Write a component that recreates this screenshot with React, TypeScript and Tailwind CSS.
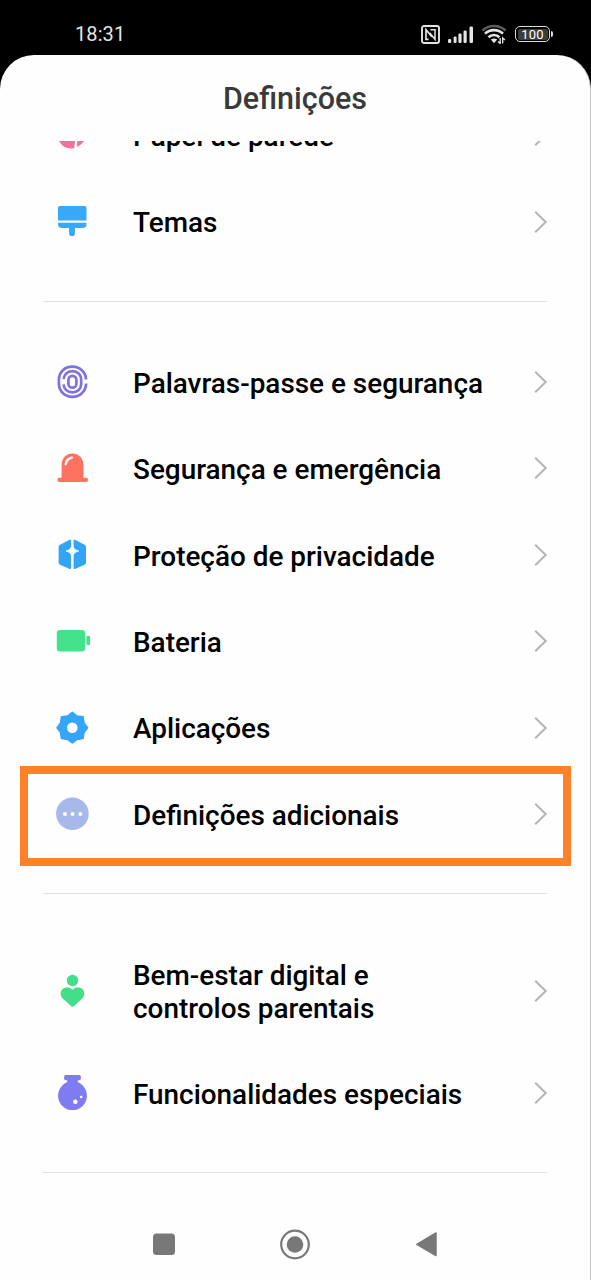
import type { ReactNode } from "react";

type Item = {
  label: string;
  icon: ReactNode;
  tall?: boolean;
};

const Icon = ({ children }: { children: ReactNode }) => (
  <svg viewBox="0 0 40 40" className="w-10 h-10 shrink-0" fill="none">
    {children}
  </svg>
);

const WallpaperIcon = () => (
  <Icon>
    <path d="M5.8 18a13.5 13.5 0 0 0 16.3 15.2L24.2 18z" fill="#f4709a" />
    <path d="M26.4 18l-1.8 13.9A14 14 0 0 0 34 18z" fill="#f4709a" />
  </Icon>
);

const ThemesIcon = () => (
  <Icon>
    <path d="M8 4h24.5a2 2 0 0 1 2 2v12.5H6V6a2 2 0 0 1 2-2z" fill="#38a9f8" />
    <path
      d="M6 20.7h28.5v1.3a4 4 0 0 1-4 4h-6.8a.8.8 0 0 0-.8.8v4.4a2.9 2.9 0 0 1-5.8 0v-4.4a.8.8 0 0 0-.8-.8H10a4 4 0 0 1-4-4z"
      fill="#38a9f8"
    />
  </Icon>
);

const FingerprintIcon = () => (
  <Icon>
    <g stroke="#7d72df" strokeWidth="2.7">
      <path d="M34.1 17.5v-.2C33.6 10 27.8 4.7 20.4 4.7 12.4 4.7 6.9 10.4 6.9 17.8v3.8c0 7.6 5.6 13.2 13.5 13.2 7.4 0 13.2-5.3 13.7-12.6v-.6" />
      <path d="M11.6 17.2c.3-4.6 3.8-8 8.8-8 5.1 0 8.8 3.5 8.8 8.5v4.2c0 5-3.7 8.4-8.8 8.4-5 0-8.5-3.3-8.8-8" />
      <rect x="16.4" y="13.9" width="8" height="11.8" rx="4" />
    </g>
  </Icon>
);

const AlarmIcon = () => (
  <Icon>
    <path
      d="M9.6 29.8V17.3c0-7 4.4-11.8 10.9-11.8s10.9 4.8 10.9 11.8v12.5H34a2 2 0 0 1 0 4.2H7.4a2 2 0 0 1 0-4.2z"
      fill="#fd735f"
    />
    <path
      d="M13.7 16.1c.6-3.4 2.8-5.7 6-6.5"
      stroke="#fff"
      strokeWidth="2.5"
      strokeLinecap="round"
    />
  </Icon>
);

const PrivacyIcon = () => (
  <Icon>
    <path
      d="M17.7 4.7 8 9.7a2.6 2.6 0 0 0-1.4 2.3v15.4a2.6 2.6 0 0 0 1.4 2.3l9.7 4.2a.9.9 0 0 0 1.3-.8V5.5a.9.9 0 0 0-1.3-.8zM22.9 4.7l9.7 5a2.6 2.6 0 0 1 1.4 2.3v15.4a2.6 2.6 0 0 1-1.4 2.3l-9.7 4.2a.9.9 0 0 1-1.3-.8V5.5a.9.9 0 0 1 1.3-.8z"
      fill="#32a5f6"
    />
    <path
      d="M20.3 8.5c.9 4.6 2 6.3 6.3 7.5-4.3 1.2-5.4 2.9-6.3 7.5-.9-4.6-2-6.3-6.3-7.5 4.3-1.2 5.400-2.900 6.300-7.500z"
      fill="#fff"
      stroke="#fff"
      strokeWidth=".8"
    />
  </Icon>
);

const BatteryIcon = () => (
  <Icon>
    <rect x="4.8" y="9" width="28.3" height="21.5" rx="3.2" fill="#43e38c" />
    <rect x="34.4" y="14.7" width="3.7" height="9.5" rx="1.4" fill="#43e38c" />
  </Icon>
);

const GearIcon = () => (
  <Icon>
    <path
      d="M20.3 4.4 25 8.100 31 8.900 31.900 15 35.500 19.700 31.900 24.400 31 30.400 25 31.300 20.300 34.900 15.600 31.300 9.600 30.400 8.700 24.400 5.100 19.700 8.700 15 9.600 8.900 15.600 8.100z"
      fill="#34a5f7"
      stroke="#34a5f7"
      strokeWidth="1.8"
      strokeLinejoin="round"
    />
    <circle cx="20.3" cy="19.7" r="5.3" fill="#fff" />
  </Icon>
);

const MoreIcon = () => (
  <Icon>
    <circle cx="20.4" cy="19.7" r="16.3" fill="#a7b9e8" />
    <g fill="#fff">
      <circle cx="13" cy="19.9" r="2" />
      <circle cx="20.5" cy="19.9" r="2" />
      <circle cx="28.3" cy="19.9" r="2" />
    </g>
  </Icon>
);

const WellbeingIcon = () => (
  <Icon>
    <circle cx="20.5" cy="9.5" r="5.7" fill="#43df88" />
    <path
      d="M20.5 18.7c2-2 4.2-2.5 6.5-2.2 5 .7 7 6.4 3.8 10.4l-9 8.3a1.9 1.9 0 0 1-2.6 0l-9-8.3c-3.2-4-1.2-9.7 3.8-10.4 2.3-.3 4.5.2 6.500 2.200z"
      fill="#43df88"
    />
  </Icon>
);

const FlaskIcon = () => (
  <Icon>
    <circle cx="20.5" cy="22.7" r="14.4" fill="#7f7bf2" />
    <path
      d="M13.9 2.100h13.200a1.800 1.800 0 0 1 1.800 1.800v1.500a1.800 1.800 0 0 1-1.800 1.800h-1.300v4H15.200v-4h-1.300a1.800 1.800 0 0 1-1.800-1.800V3.900a1.800 1.800 0 0 1 1.800-1.800z"
      fill="#7f7bf2"
    />
    <circle cx="23.3" cy="28.8" r="2.3" fill="#fff" />
    <circle cx="29.2" cy="24" r="1.3" fill="#fff" />
  </Icon>
);

const sections: Item[][] = [
  [
    { label: "Papel de parede", icon: <WallpaperIcon /> },
    { label: "Temas", icon: <ThemesIcon /> },
  ],
  [
    { label: "Palavras-passe e segurança", icon: <FingerprintIcon /> },
    { label: "Segurança e emergência", icon: <AlarmIcon /> },
    { label: "Proteção de privacidade", icon: <PrivacyIcon /> },
    { label: "Bateria", icon: <BatteryIcon /> },
    { label: "Aplicações", icon: <GearIcon /> },
    { label: "Definições adicionais", icon: <MoreIcon /> },
  ],
  [
    {
      label: "Bem-estar digital e controlos parentais",
      icon: <WellbeingIcon />,
      tall: true,
    },
    { label: "Funcionalidades especiais", icon: <FlaskIcon /> },
  ],
];

const highlighted = "Definições adicionais";

function Row({ item }: { item: Item }) {
  return (
    <div
      className={`relative flex items-center pl-[52px] pr-[42px] ${
        item.tall ? "h-[119px]" : "h-[86.4px]"
      }`}
    >
      {item.icon}
      <span className="ml-[41px] w-[360px] pt-1 text-[27.9px] leading-[32.5px] font-medium text-black">
        <span className={item.tall ? "block w-[265px]" : "whitespace-nowrap"}>
          {item.label}
        </span>
      </span>
      <svg
        viewBox="0 0 14 24"
        className="ml-auto w-3.5 h-6 shrink-0"
        fill="none"
        stroke="#b4b4b4"
        strokeWidth="2"
      >
        <path d="M1.2 1.8 11.7 12 1.2 22.2" />
      </svg>
      {item.label === highlighted && (
        <div className="absolute left-5 top-[-5px] w-[551px] h-[100px] border-8 border-[#ff8228]" />
      )}
    </div>
  );
}

function StatusBar() {
  return (
    <div className="flex h-[55px] shrink-0 items-center justify-between bg-black pl-[75px] pr-[38px] pt-[14px] pb-[1px] text-[#e4e4e4]">
      <span className="text-[20px] leading-10 tracking-[0.1px]">18:31</span>
      <div className="flex items-center">
        <svg viewBox="0 0 19 19" className="w-[19px] h-[19px]" fill="none" stroke="currentColor">
          <rect x="1" y="1" width="17" height="17" rx="2" strokeWidth="1.9" />
          <path d="M7.600 14.300H5V4.600l5.800 7.200" strokeWidth="1.700" />
          <path d="M9.400 4.700H14v9.600L8.600 7.800" strokeWidth="1.500" />
        </svg>
        <svg viewBox="0 0 26 17" className="ml-2 w-[26px] h-[17px]" fill="currentColor">
          <rect x="0" y="13" width="3.2" height="4" rx="1.2" />
          <rect x="5.6" y="10.5" width="3" height="6.5" rx="1.2" />
          <rect x="10.4" y="7.5" width="3.2" height="9.5" rx="1.2" />
          <rect x="15.5" y="4.5" width="3.2" height="12.5" rx="1.2" />
          <rect x="21.5" y="0.5" width="3.5" height="16.5" rx="1.2" />
        </svg>
        <svg viewBox="0 0 26 20" className="ml-[7px] w-[26px] h-5" fill="none" stroke="currentColor">
          <path d="M1.5 6.5c6.5-6 16.5-6 23 0" strokeWidth="2.6" stroke="#5c5c5c" />
          <path d="M4 9.6c5-4.6 13-4.6 18 0" strokeWidth="2.6" />
          <path d="M7.5 13.2c3.2-2.9 7.8-2.9 11 0" strokeWidth="2.6" />
          <path d="M13 19.2l-3.2-3.6c2-1.5 4.4-1.5 6.4 0z" fill="currentColor" stroke="none" />
          <path d="M19.2 14v5.5l-2.2-2M21.7 19.5V14l2.2 2" strokeWidth="1.3" />
        </svg>
        <div className="ml-2 flex h-4 w-[35px] items-center justify-center rounded-[5px] border-[1.5px] border-[#dcdcdc] p-[1.5px]">
          <div className="flex h-full w-full items-center justify-center rounded-[2px] bg-[#3c3c3c] text-[13px] leading-none tracking-[0.2px] text-white">
            100
          </div>
        </div>
        <div className="ml-px h-1.5 w-[2px] rounded-r bg-[#dcdcdc]" />
      </div>
    </div>
  );
}

function NavBar() {
  return (
    <div className="flex h-[72px] shrink-0 items-center justify-between px-[152px]">
      <svg viewBox="0 0 24 24" className="w-6 h-6">
        <rect x="1" y="1.5" width="22" height="21.5" rx="3.5" fill="#787878" />
      </svg>
      <svg viewBox="0 0 32 32" className="w-8 h-8" fill="none">
        <circle cx="16" cy="16.5" r="13.8" stroke="#787878" strokeWidth="2.2" />
        <circle cx="16" cy="16.5" r="8.3" fill="#787878" />
      </svg>
      <svg viewBox="0 0 24 28" className="w-6 h-7">
        <path
          d="M22 3v22.6L2.8 14.3z"
          fill="#787878"
          stroke="#787878"
          strokeWidth="1.5"
          strokeLinejoin="round"
        />
      </svg>
    </div>
  );
}

export default function App() {
  return (
    <div className="h-[1280px] w-[591px] overflow-hidden bg-black font-['Roboto',sans-serif]">
      <StatusBar />
      <div className="flex h-[1225px] flex-col overflow-hidden rounded-t-[34px] border-r border-[#c4c4c4] bg-[#fefefe]">
        <header className="flex h-[86px] shrink-0 items-center justify-center pt-[2px] text-[30.5px] font-medium text-[#3a3a3a]">
          Definições
        </header>
        <main className="h-[1067px] shrink-0 overflow-hidden">
          <div className="-mt-[49px]">
            {sections.map((items, index) => (
              <section key={index}>
                {items.map((item) => (
                  <Row key={item.label} item={item} />
                ))}
                <div
                  className={`ml-[43px] mr-[42px] mb-[37px] h-px bg-[#e4e4e4] ${
                    index === 2 ? "mt-[35px]" : "mt-9"
                  }`}
                />
              </section>
            ))}
          </div>
        </main>
        <NavBar />
      </div>
    </div>
  );
}
